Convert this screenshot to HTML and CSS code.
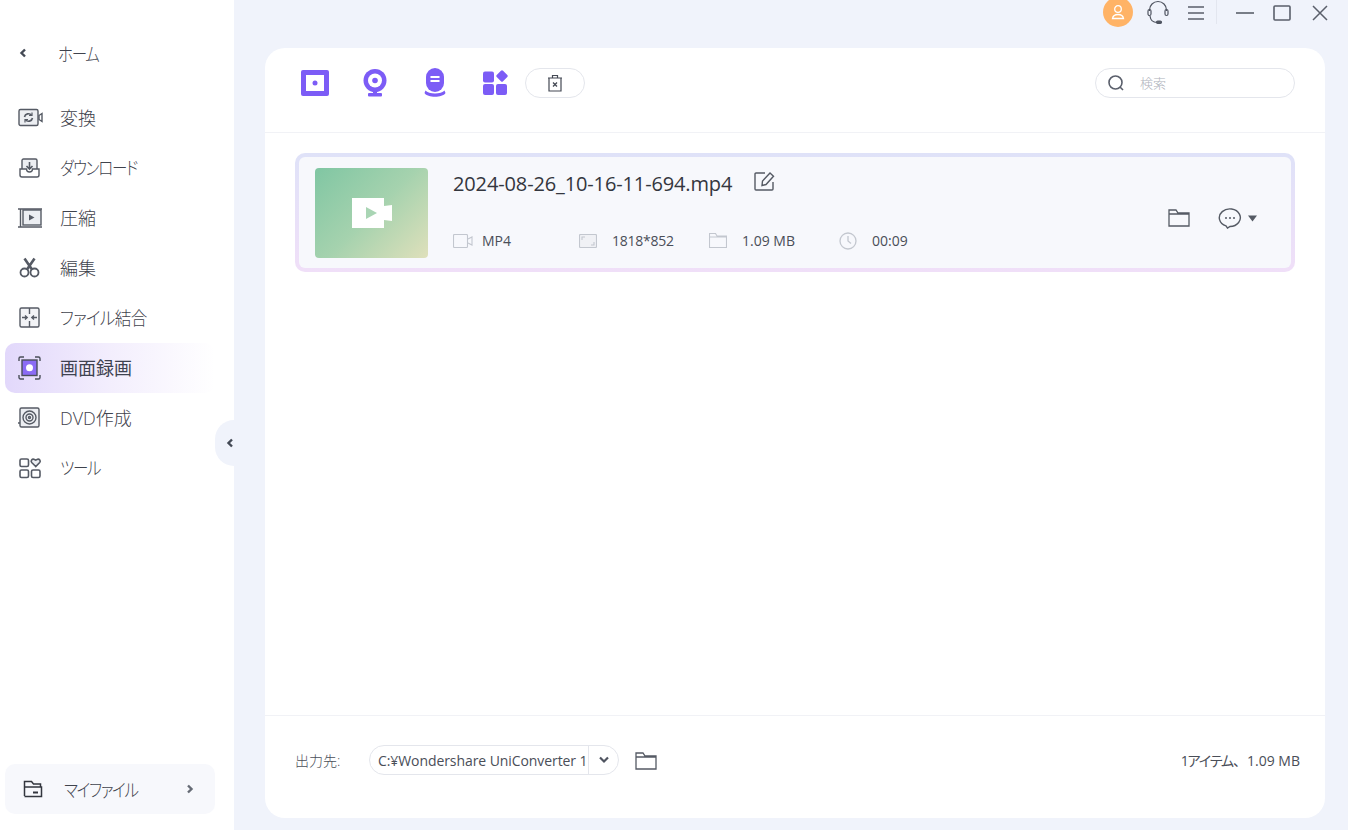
FILE: index.html
```html
<!DOCTYPE html>
<html lang="ja">
<head>
<meta charset="utf-8">
<title>UniConverter</title>
<link rel="stylesheet" href="styles.css">
</head>
<body>
<div class="app">
  <aside class="sidebar">
    <div class="home">
      <svg class="chev" width="8" height="10" viewBox="0 0 8 10"><path d="M6 1.500 2.500 5 6 8.500" fill="none" stroke="#444a55" stroke-width="2.400"/></svg>
      <span class="kana">ホーム</span>
    </div>
    <nav class="nav">
      <a class="nav-item">
        <svg width="26" height="24" viewBox="0 0 26 24" fill="none" stroke="#555a64" stroke-width="1.400"><rect x="1" y="3.500" width="19" height="16" rx="1.500" fill="#eceef2"/><path d="M21 9.500l3-2v8l-3-2z"/><path d="M6.500 11a4 4 0 0 1 7-1.800M14.500 12a4 4 0 0 1-7 1.800" stroke-width="1.600"/><path d="M14 6.500v3h-3M7 16.500v-3h3" stroke-width="1.200"/></svg>
        <span>変換</span>
      </a>
      <a class="nav-item">
        <svg width="26" height="24" viewBox="0 0 26 24" fill="none" stroke="#555a64" stroke-width="1.400"><path d="M4 13V4.500A1.500 1.500 0 0 1 5.500 3h12A1.500 1.500 0 0 1 19 4.500V13" fill="#eceef2"/><path d="M2 13h6.500a3 3 0 0 0 6 0H21v6a2 2 0 0 1-2 2H4a2 2 0 0 1-2-2z"/><path d="M11.500 6v6.500M8.500 10l3 3 3-3" stroke-width="1.600"/></svg>
        <span class="kana">ダウンロード</span>
      </a>
      <a class="nav-item">
        <svg width="26" height="24" viewBox="0 0 26 24" fill="none" stroke="#555a64" stroke-width="1.400"><rect x="5" y="4" width="18" height="15" fill="#eceef2"/><path d="M0 3h5M0 21h5M2.500 3v18M5 3h19M5 21h19" /><path d="M11 8.500l5.500 3-5.500 3z" fill="#555a64" stroke="none"/></svg>
        <span>圧縮</span>
      </a>
      <a class="nav-item">
        <svg width="26" height="24" viewBox="0 0 26 24" fill="none" stroke="#555a64" stroke-width="1.800"><circle cx="6.500" cy="16.500" r="4"/><circle cx="16.500" cy="16.500" r="4"/><path d="M9 13.500 16.500 2.500 M14 13.500 6.500 2.500" stroke-width="2.600"/></svg>
        <span>編集</span>
      </a>
      <a class="nav-item">
        <svg width="26" height="24" viewBox="0 0 26 24" fill="none" stroke="#555a64" stroke-width="1.400"><rect x="2" y="2" width="19" height="19" rx="1.500" fill="#f2f3f6"/><path d="M11.500 2v6M11.500 15v6"/><path d="M4 11.500h5M7 9.500l2.200 2-2.200 2M19 11.500h-5M16 9.500l-2.200 2 2.200 2"/></svg>
        <span class="kana-mix">ファイル結合</span>
      </a>
      <a class="nav-item active">
        <svg width="26" height="24" viewBox="0 0 26 24" fill="none" stroke="#4b4f5a" stroke-width="1.400"><path d="M1 5V2.500A1.500 1.500 0 0 1 2.500 1H6M17 1h3.500A1.500 1.500 0 0 1 22 2.500V5M22 19v2.500a1.500 1.500 0 0 1-1.500 1.500H17M6 23H2.500A1.500 1.500 0 0 1 1 21.500V19"/><rect x="4" y="4" width="15" height="15.500" fill="#8b6cf5"/><circle cx="11.500" cy="11.700" r="3.500" fill="#fff" stroke="none"/></svg>
        <span>画面録画</span>
      </a>
      <a class="nav-item">
        <svg width="26" height="24" viewBox="0 0 26 24" fill="none" stroke="#555a64" stroke-width="1.400"><path d="M0 17h2" /><rect x="2" y="2" width="19" height="19" rx="1.500" fill="#eceef2"/><circle cx="11.500" cy="11.500" r="6.500"/><circle cx="11.500" cy="11.500" r="3.500"/><circle cx="11.500" cy="11.500" r="1"/></svg>
        <span>DVD作成</span>
      </a>
      <a class="nav-item">
        <svg width="26" height="24" viewBox="0 0 26 24" fill="none" stroke="#555a64" stroke-width="1.600"><rect x="2" y="3" width="8.500" height="7.500" rx="1.500"/><rect x="2" y="14" width="8.500" height="7.500" rx="1.500"/><rect x="13.500" y="14" width="8.500" height="7.500" rx="1.500"/><path d="M17.700 10.500 13.700 6.500c-1.500-2 .5-3.800 2.200-3.300l1.800 1 1.800-1c1.700-.5 3.700 1.300 2.200 3.300z" fill="#eceef2"/></svg>
        <span class="kana">ツール</span>
      </a>
    </nav>
    <a class="myfiles">
      <svg width="22" height="20" viewBox="0 0 22 20" fill="none" stroke="#33363e" stroke-width="1.500"><path d="M1.500 17V2.500h7l2 2.500h7v3"/><path d="M1.500 17.500h17V8h-17" /><path d="M10 13.500h5" stroke-width="2"/></svg>
      <span class="myfiles-label"><span class="kana">マイファイル</span></span>
      <svg width="8" height="10" viewBox="0 0 8 10"><path d="M2 1.500 5.500 5 2 8.500" fill="none" stroke="#666b75" stroke-width="2.400"/></svg>
    </a>
    <div class="collapse">
      <svg width="8" height="10" viewBox="0 0 8 10"><path d="M6 1.500 2.500 5 6 8.500" fill="none" stroke="#444a55" stroke-width="2.400"/></svg>
    </div>
  </aside>

  <main class="main">
    <header class="titlebar">
      <div class="avatar">
        <svg width="16" height="16" viewBox="0 0 16 16" fill="none" stroke="#fff" stroke-width="1.300"><circle cx="8" cy="5" r="3.300"/><path d="M2.500 14.500c.5-3 2.500-4 5.500-4s5 1 5.500 4z"/></svg>
      </div>
      <svg class="tb-headset" width="24" height="26" viewBox="0 0 24 26" fill="none" stroke="#4f5460" stroke-width="1.200"><path d="M3.500 11V10a8.500 8.500 0 0 1 17 0v1"/><rect x="2" y="9.500" width="3" height="6" rx="1.500"/><rect x="19" y="9.500" width="3" height="6" rx="1.500"/><path d="M4 16c.5 4 3 6.500 7 6.500"/><rect x="10.500" y="21" width="5" height="2.500" rx="1.200" fill="#4f5460"/></svg>
      <svg class="tb-menu" width="16" height="16" viewBox="0 0 16 16" fill="none" stroke="#5a5f6b" stroke-width="1.500"><path d="M0 2h16M0 8h16M0 14h16"/></svg>
      <span class="tb-sep"></span>
      <svg class="tb-min" width="18" height="4" viewBox="0 0 18 4" fill="none" stroke="#5a5f6b" stroke-width="1.600"><path d="M0 2h18"/></svg>
      <svg class="tb-max" width="18" height="16" viewBox="0 0 18 16" fill="none" stroke="#5a5f6b" stroke-width="1.600"><rect x="1" y="1" width="16" height="14" rx="1"/></svg>
      <svg class="tb-close" width="16" height="16" viewBox="0 0 16 16" fill="none" stroke="#5a5f6b" stroke-width="1.500"><path d="M1 1l14 14M15 1 1 15"/></svg>
    </header>

    <section class="card">
      <div class="toolbar">
        <div class="tools">
          <svg width="30" height="30" viewBox="0 0 30 30"><rect x="1" y="2" width="28" height="26" rx="2" fill="#7c5cf6"/><rect x="6" y="7" width="18" height="16" fill="#fff"/><circle cx="15" cy="15" r="2.500" fill="#7c5cf6"/></svg>
          <svg width="30" height="30" viewBox="0 0 30 30"><circle cx="15" cy="12.500" r="11.500" fill="#7c5cf6"/><circle cx="15" cy="12.500" r="7" fill="#fff"/><circle cx="15" cy="12.500" r="2.800" fill="#7c5cf6"/><rect x="13" y="23" width="4" height="3" fill="#7c5cf6"/><rect x="8" y="25" width="14" height="3.500" rx="1" fill="#7c5cf6"/></svg>
          <svg width="30" height="30" viewBox="0 0 30 30" fill="none"><rect x="6" y="0" width="18" height="24" rx="9" fill="#7c5cf6"/><path d="M10.500 9h9M10.500 13h9" stroke="#fff" stroke-width="1.800"/><path d="M5.500 22.500c3 4 16 4 19 0l1 2.500c-3 5-18 5-21 0z" fill="#7c5cf6"/></svg>
          <svg width="30" height="30" viewBox="0 0 30 30" fill="#7c5cf6"><rect x="3" y="3.500" width="11" height="11" rx="2"/><rect x="3" y="16" width="11" height="11" rx="2"/><rect x="16" y="16" width="11" height="11" rx="2"/><rect x="17.500" y="3.500" width="9" height="9" rx="1.500" transform="rotate(45 22 8)"/></svg>
          <button class="trash">
            <svg width="16" height="18" viewBox="0 0 16 18" fill="none" stroke="#444954" stroke-width="1.200"><path d="M1 4h14M5.500 4V1.500h5V4M2 4v13h12V4"/><path d="M6 8.500l4 4M10 8.500l-4 4" stroke-width="1.300"/></svg>
          </button>
        </div>
        <div class="search">
          <svg width="18" height="18" viewBox="0 0 18 18" fill="none" stroke="#5a5f6b" stroke-width="1.600"><circle cx="8.500" cy="8.500" r="6.500"/><path d="M13 13l3 3"/></svg>
          <span>検索</span>
        </div>
      </div>

      <div class="list">
        <article class="file">
          <div class="file-inner">
            <div class="thumb">
              <svg width="40" height="30" viewBox="0 0 40 30"><path d="M0 0h32v8l8-1v16l-8-1v8H0z" fill="#fff"/><path d="M14 9l11 6-11 6z" fill="#a9d5b4"/></svg>
            </div>
            <div class="info">
              <div class="name-row">
                <span class="name">2024-08-26_10-16-11-694.mp4</span>
                <svg class="edit" width="22" height="22" viewBox="0 0 22 22" fill="none" stroke="#555a64" stroke-width="1.400"><path d="M12 2H3a1 1 0 0 0-1 1v15a1 1 0 0 0 1 1h16a1 1 0 0 0 1-1v-7"/><path d="M9 14.500l.5-4.500L17 2l3.500 3.200L13 13.500z"/></svg>
              </div>
              <div class="meta">
                <div class="meta-item m1">
                  <svg width="20" height="14" viewBox="0 0 20 14" fill="none" stroke="#c3c7cf" stroke-width="1.100"><rect x=".5" y=".5" width="14" height="13" rx="1"/><path d="M15 5l4-2v8l-4-2"/></svg>
                  <span>MP4</span>
                </div>
                <div class="meta-item m2">
                  <svg width="18" height="14" viewBox="0 0 18 14" fill="none" stroke="#c3c7cf" stroke-width="1.100"><rect x=".5" y=".5" width="17" height="13" rx="1" fill="#f0f1f5"/><path d="M3 6V3h3M15 8v3h-3"/></svg>
                  <span>1818*852</span>
                </div>
                <div class="meta-item m3">
                  <svg width="18" height="15" viewBox="0 0 18 15" fill="none" stroke="#c3c7cf" stroke-width="1.100"><path d="M.5 14.500V.5h6l1.500 2.500h9.500v11.500zM.5 4h17"/></svg>
                  <span>1.09 MB</span>
                </div>
                <div class="meta-item m4">
                  <svg width="18" height="18" viewBox="0 0 18 18" fill="none" stroke="#c3c7cf" stroke-width="1.300"><circle cx="9" cy="9" r="8"/><path d="M9 4v5l3 2.500"/></svg>
                  <span>00:09</span>
                </div>
              </div>
            </div>
            <div class="file-actions">
              <svg width="22" height="18" viewBox="0 0 22 18" fill="none" stroke="#555a64" stroke-width="1.300"><path d="M1 17V1h7l2 3h11v13zM1 5h20"/></svg>
              <div class="more">
                <svg width="24" height="22" viewBox="0 0 24 22" fill="none" stroke="#555a64" stroke-width="1.400"><path d="M12 19.500a10.500 8.800 0 1 0-4-.6l1.500 2.200z"/><circle cx="8" cy="11" r="1" fill="#555a64" stroke="none"/><circle cx="12" cy="11" r="1" fill="#555a64" stroke="none"/><circle cx="16" cy="11" r="1" fill="#555a64" stroke="none"/></svg>
                <svg width="9" height="7" viewBox="0 0 9 7"><path d="M0 .5h9L4.500 6.500z" fill="#555a64"/></svg>
              </div>
            </div>
          </div>
        </article>
      </div>

      <footer class="footer">
        <span class="out-label">出力先:</span>
        <div class="path">
          <span class="path-text">C:¥Wondershare UniConverter 1</span>
          <span class="path-drop"><svg width="10" height="8" viewBox="0 0 10 8"><path d="M1 1.500l4 4 4-4" fill="none" stroke="#4f5460" stroke-width="2.200"/></svg></span>
        </div>
        <svg class="out-folder" width="22" height="18" viewBox="0 0 22 18" fill="none" stroke="#555a64" stroke-width="1.300"><path d="M1 17V1h7l2 3h11v13zM1 5h20"/></svg>
        <span class="summary"><span class="sum-kana">1アイテム</span>、1.09 MB</span>
      </footer>
    </section>
  </main>
</div>
</body>
</html>
```

FILE: styles.css
```css
* { box-sizing: border-box; }
html, body { margin: 0; height: 100%; }
body {
  font-family: "Open Sans", "Noto Sans CJK JP", sans-serif;
  color: #4a4e58;
  background: #f0f3fb;
  overflow: hidden;
}
svg { display: block; flex: none; }

.app { display: flex; width: 1348px; height: 830px; }

.sidebar {
  position: relative;
  flex: none;
  width: 234px;
  background: #fff;
  padding: 0 19px 16px 5px;
  display: flex;
  flex-direction: column;
}
.home {
  height: 93px;
  padding: 13px 0 0 14px;
  display: flex;
  align-items: center;
  gap: 31px;
  font-size: 18px;
  font-weight: 300;
  color: #3f434d;
}
.nav { display: flex; flex-direction: column; flex: 1; }
.nav-item {
  height: 50px;
  display: flex;
  align-items: center;
  gap: 16px;
  padding: 0 0 2px 13px;
  font-size: 18px;
  font-weight: 300;
  color: #3f434d;
  border-radius: 10px;
}
.nav-item svg { margin-top: 2px; }
.kana {
  display: inline-block;
  font-feature-settings: "palt";
  letter-spacing: -1.400px;
  transform: scaleX(.86);
  transform-origin: left center;
  white-space: nowrap;
}
.kana-mix {
  display: inline-block;
  font-feature-settings: "palt";
  letter-spacing: -.700px;
  transform: scaleX(.92);
  transform-origin: left center;
  white-space: nowrap;
}
.nav-item.active {
  background: linear-gradient(90deg, #e2d8fb 0%, #f3eefd 50%, #ffffff 100%);
  font-weight: 400;
  color: #3e4250;
}
.myfiles {
  height: 50px;
  display: flex;
  align-items: center;
  padding: 0 21px 0 18px;
  background: #f7f8fc;
  border-radius: 10px;
  font-size: 18px;
  font-weight: 300;
  color: #3f434d;
}
.myfiles-label { flex: 1; margin-left: 19px; }
.collapse {
  position: absolute;
  top: 420px;
  right: 0;
  width: 19px;
  height: 46px;
  background: #f0f3fb;
  border-radius: 23px 0 0 23px;
  display: flex;
  align-items: center;
  justify-content: flex-end;
}

.main {
  flex: 1;
  min-width: 0;
  display: flex;
  flex-direction: column;
  padding: 0 23px 12px 31px;
}
.titlebar {
  height: 48px;
  flex: none;
  display: flex;
  align-items: flex-start;
  margin-right: -23px;
  padding-right: 20px;
  justify-content: flex-end;
}
.avatar {
  width: 30px;
  height: 30px;
  margin-top: -3px;
  border-radius: 50%;
  background: #ffb366;
  display: flex;
  align-items: center;
  justify-content: center;
}
.tb-headset { margin: 0 0 0 13px; }
.tb-menu { margin: 5px 0 0 18px; }
.tb-sep { width: 1px; height: 24px; background: #e3e6ef; margin-left: 12px; }
.tb-min { margin: 11px 0 0 19px; }
.tb-max { margin: 5px 0 0 19px; }
.tb-close { margin: 5px 0 0 21px; }

.card {
  flex: 1;
  min-height: 0;
  background: #fff;
  border-radius: 20px;
  display: flex;
  flex-direction: column;
}
.toolbar {
  height: 85px;
  flex: none;
  border-bottom: 1px solid #f1f2f6;
  display: flex;
  align-items: center;
  justify-content: space-between;
  padding: 0 30px 14px 35px;
}
.tools { display: flex; align-items: center; gap: 30px; }
.trash {
  width: 60px;
  height: 30px;
  margin-left: -15px;
  border: 1px solid #e4e6ec;
  border-radius: 15px;
  background: #fff;
  display: flex;
  align-items: center;
  justify-content: center;
  padding: 0;
}
.search {
  width: 200px;
  height: 30px;
  border: 1px solid #e4e6ec;
  border-radius: 15px;
  display: flex;
  align-items: center;
  gap: 15px;
  padding: 0 0 1px 11px;
  font-size: 13px;
  font-weight: 300;
  color: #aeb2bb;
}

.list { flex: 1; min-height: 0; padding: 20px 30px; }
.file {
  height: 119px;
  padding: 4px;
  border-radius: 10px;
  background: linear-gradient(180deg, #dfe2f8 0%, #f0dff8 100%);
}
.file-inner {
  height: 100%;
  background: #f7f8fc;
  border-radius: 6px;
  display: flex;
  align-items: flex-start;
  padding: 11px 34px 0 16px;
}
.thumb {
  width: 113px;
  height: 90px;
  flex: none;
  border-radius: 4px;
  background: linear-gradient(135deg, #80c6a3 0%, #a5d2ae 50%, #dfe0bb 100%);
  display: flex;
  align-items: center;
  justify-content: center;
}
.info { margin-left: 25px; flex: 1; min-width: 0; }
.name-row { display: flex; align-items: flex-start; gap: 21px; height: 36px; }
.name { font-size: 20px; letter-spacing: -.130px; color: #33363e; line-height: 32px; }
.edit { margin-top: 3px; }
.meta { display: flex; align-items: center; margin-top: 27px; font-size: 14px; color: #4a4e58; }
.meta-item { display: flex; align-items: center; gap: 9px; }
.meta-item.m1 { width: 126px; }
.meta-item.m2 { width: 130px; gap: 15px; letter-spacing: -.250px; }
.meta-item.m3 { width: 130px; gap: 15px; }
.meta-item.m4 { gap: 15px; }
.file-actions { display: flex; align-items: center; gap: 28px; margin-top: 39px; }
.more { display: flex; align-items: center; gap: 6px; }

.footer {
  height: 103px;
  flex: none;
  border-top: 1px solid #f1f2f6;
  display: flex;
  align-items: center;
  padding: 0 25px 14px 30px;
  font-size: 14px;
}
.out-label { width: 74px; font-weight: 300; }
.path {
  width: 250px;
  height: 30px;
  border: 1px solid #e4e6ec;
  border-radius: 15px;
  display: flex;
  align-items: center;
  padding-left: 8px;
}
.path-text { flex: 1; white-space: nowrap; letter-spacing: -.08px; }
.path-drop {
  width: 30px;
  height: 100%;
  border-left: 1px solid #e4e6ec;
  display: flex;
  align-items: center;
  justify-content: center;
}
.out-folder { margin: 2px 0 0 16px; }
.summary { margin-left: auto; }
.sum-kana { font-feature-settings: "palt"; letter-spacing: -1.100px; }
```
